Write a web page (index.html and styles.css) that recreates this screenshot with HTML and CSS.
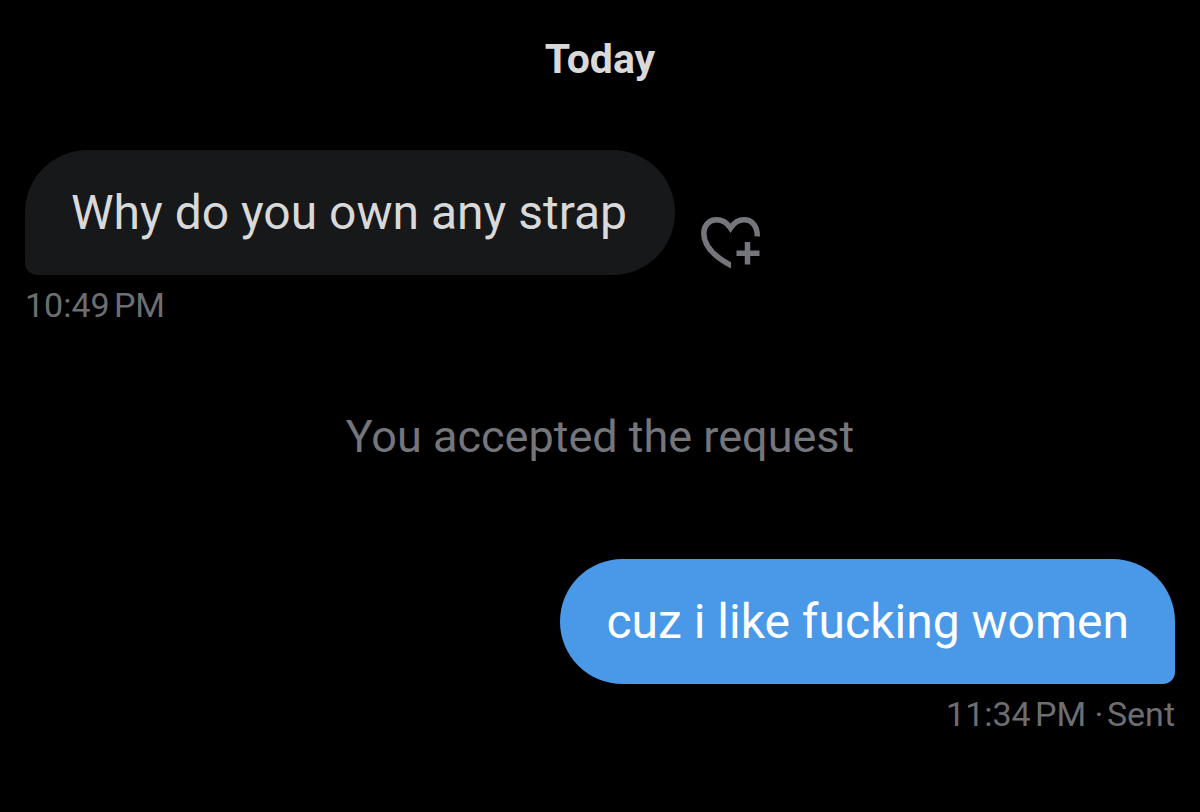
FILE: index.html
```
<!DOCTYPE html>
<html lang="en">
<head>
    <meta charset="UTF-8">
    <meta name="viewport" content="width=device-width, initial-scale=1">
    <title>Messages</title>
    <link rel="stylesheet" href="styles.css">
</head>
<body>
    <main class="conversation">
        <h1 class="day">Today</h1>

        <section class="message received">
            <div class="message-row">
                <p class="bubble">Why do you own any strap</p>
                <button type="button" class="react" aria-label="Add reaction">
                    <svg class="react-icon" viewBox="0 0 60 52" aria-hidden="true">
                        <clipPath id="heartCut">
                            <path d="M0 0H60V20H30V52H0Z" />
                        </clipPath>
                        <path clip-path="url(#heartCut)" d="M36 51.500C16 42 2.800 31 2.800 16.500C2.800 8 8.500 2.800 15.500 2.800C21.500 2.800 26 5.800 29.500 11C33 5.800 37.500 2.800 43 2.800C51 2.800 56.500 9 56.200 19.300" />
                        <path d="M46.500 25V47.500M35.500 36.300H58.500" />
                    </svg>
                </button>
            </div>
            <p class="meta"><time>10:49&#8239;PM</time></p>
        </section>

        <p class="notice">You accepted the request</p>

        <section class="message sent">
            <div class="message-row">
                <p class="bubble">cuz i like fucking women</p>
            </div>
            <p class="meta"><time>11:34&#8239;PM</time> <span>·&#8202;Sent</span></p>
        </section>
    </main>
</body>
</html>
```
FILE: styles.css
```
* {
    box-sizing: border-box;
}

body {
    margin: 0;
    background: #000;
    color: #d9d9d9;
    font-family: Roboto, "Liberation Sans", sans-serif;
}

h1, p {
    margin: 0;
}

.conversation {
    padding: 35px 25px;
}

.day {
    font-size: 41px;
    line-height: 48px;
    font-weight: bold;
    text-align: center;
}

.message {
    display: flex;
    flex-direction: column;
    align-items: flex-start;
}

.message-row {
    display: flex;
    align-items: flex-end;
    gap: 26px;
}

.bubble {
    padding: 32px 46px;
    border-radius: 63px;
    font-size: 48px;
    line-height: 61px;
}

.received {
    margin-top: 67px;
}

.received .bubble {
    padding-right: 48px;
    background: #16181a;
    border-bottom-left-radius: 12px;
}

.sent {
    align-items: flex-end;
}

.sent .bubble {
    background: #4a99e9;
    color: #fff;
    border-bottom-right-radius: 12px;
}

.react {
    padding: 0 0 6px;
    border: none;
    background: none;
    color: #75767b;
    cursor: pointer;
}

.react-icon {
    display: block;
    width: 60px;
    height: 52px;
    fill: none;
    stroke: currentColor;
    stroke-width: 5.5;
}

.meta {
    margin-top: 8px;
    color: #6d6e72;
    font-size: 34px;
    line-height: 44px;
}

.notice {
    margin: 76px 0 88px;
    color: #75767b;
    font-size: 45px;
    line-height: 68px;
    text-align: center;
}
```
